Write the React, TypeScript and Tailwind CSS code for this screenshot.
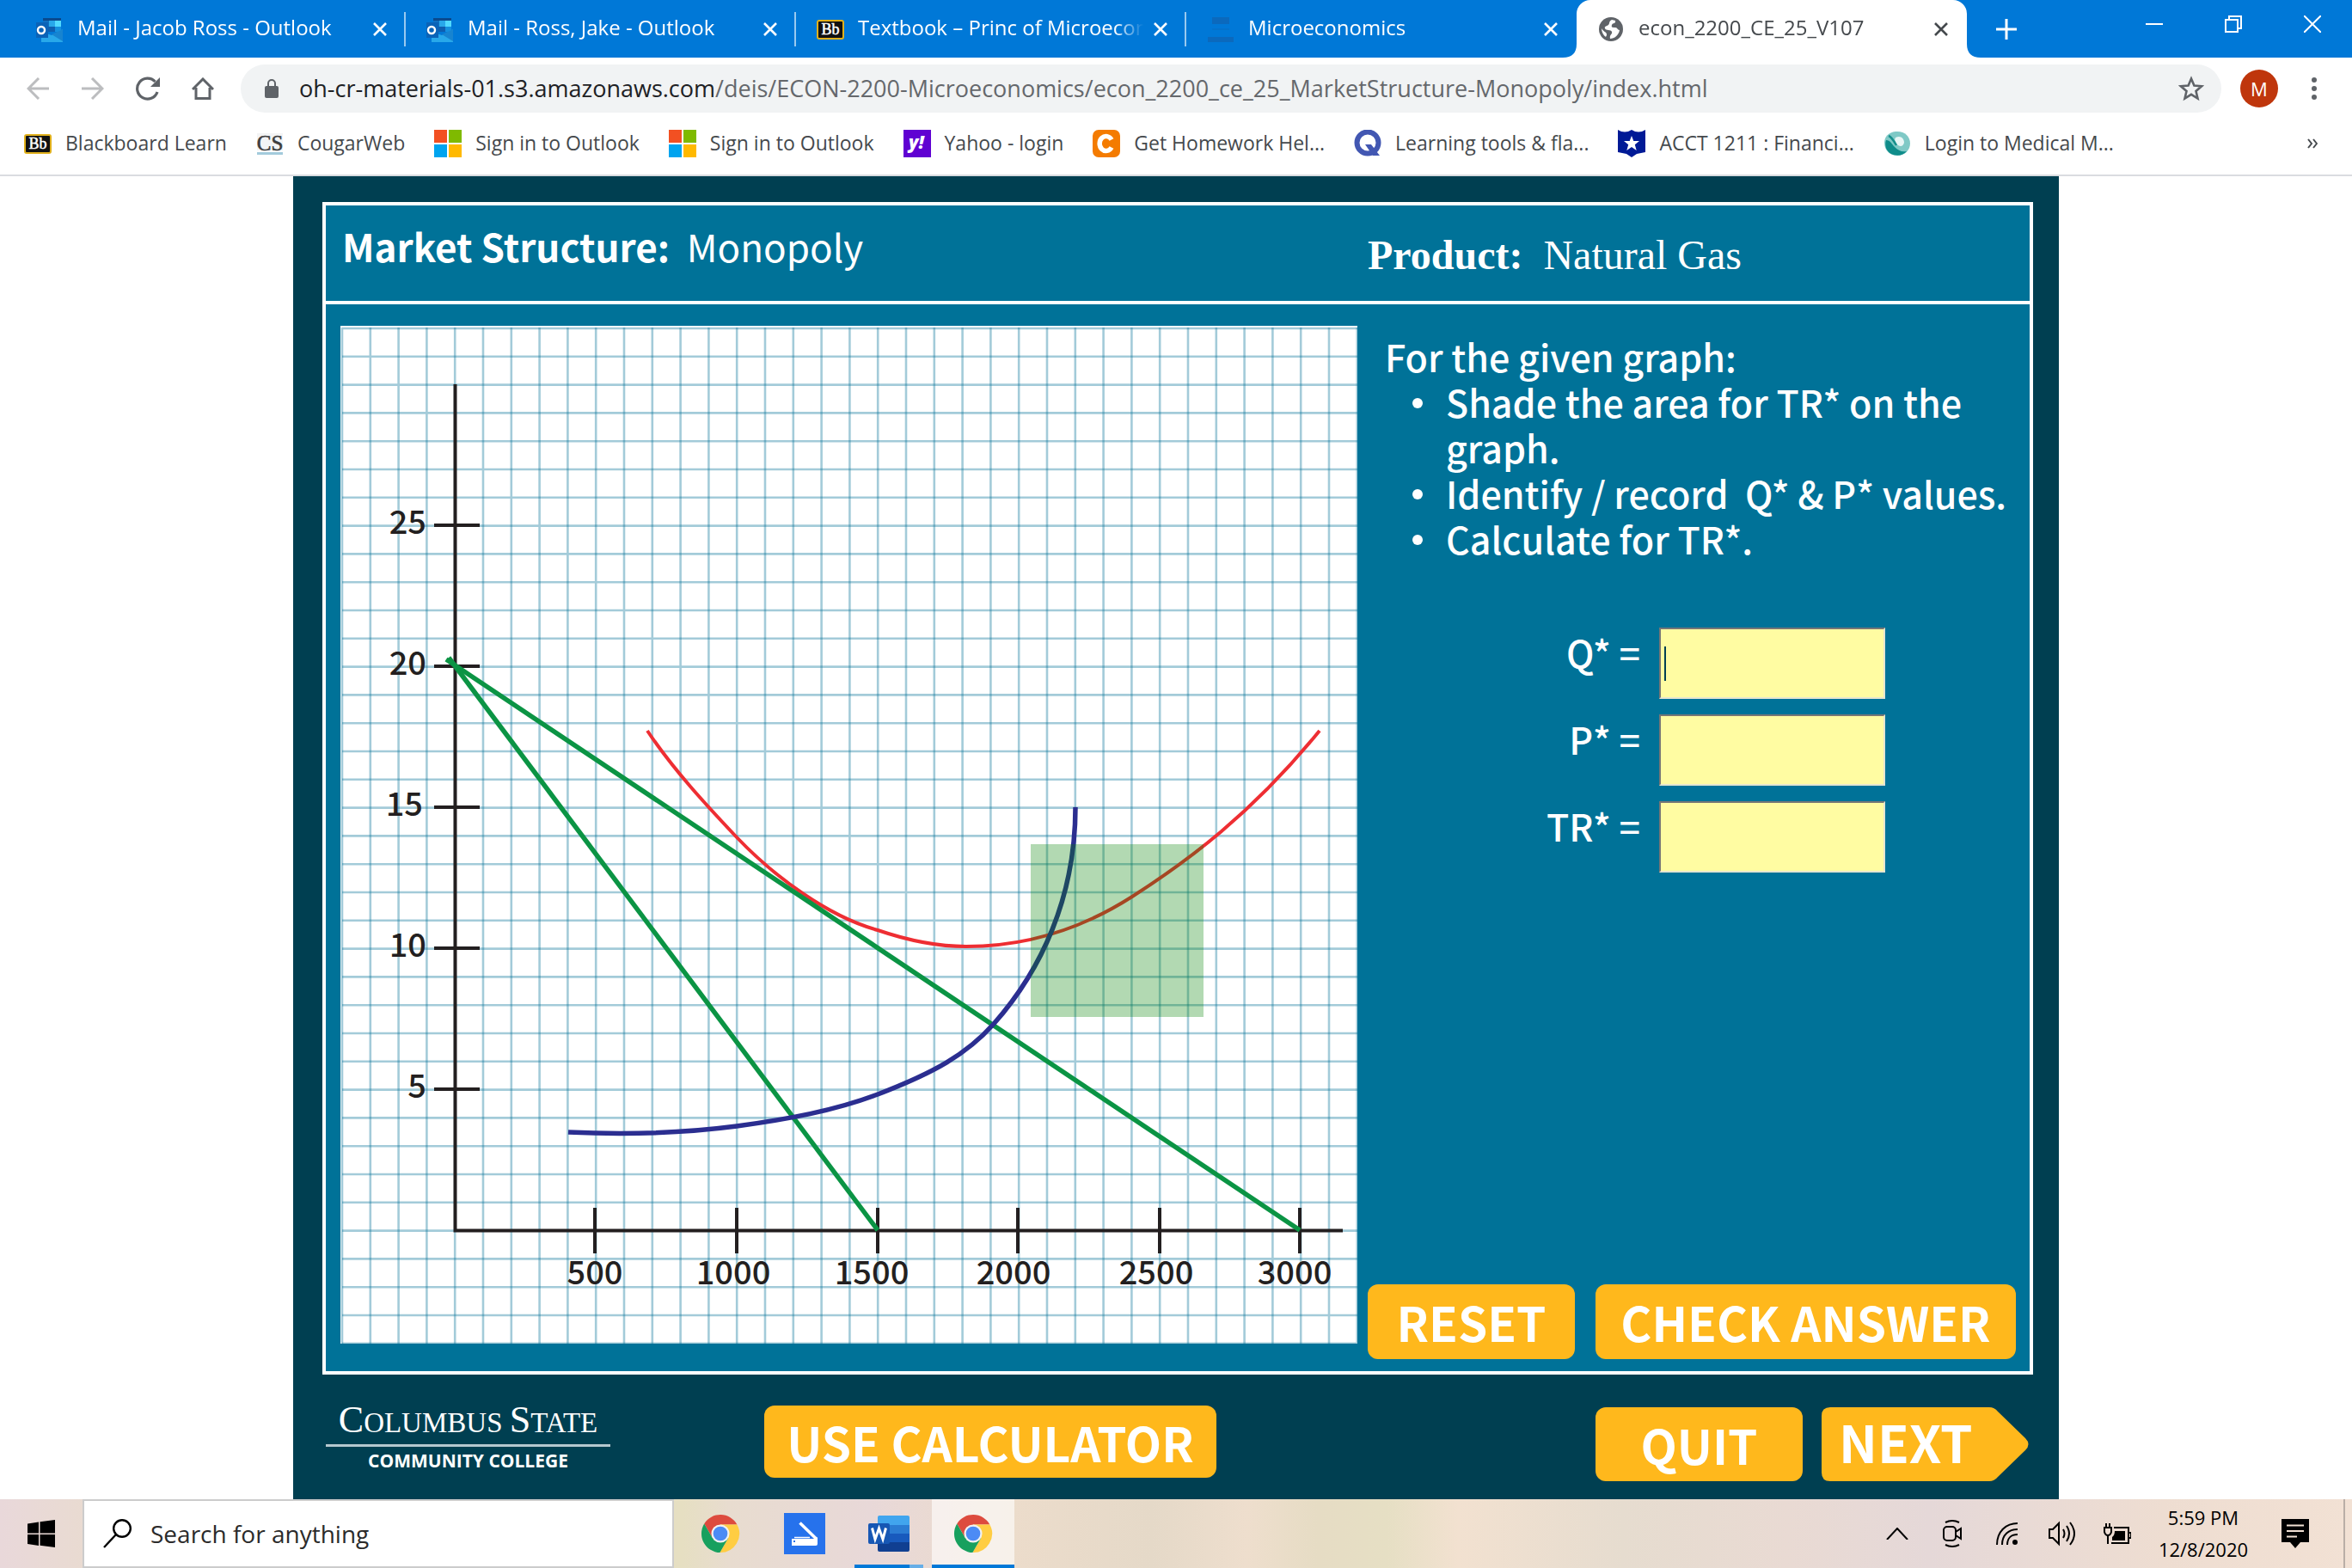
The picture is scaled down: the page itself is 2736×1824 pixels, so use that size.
import { useState } from 'react';
import type { ReactNode } from 'react';

type Tab = { title: string; icon: ReactNode; active?: boolean; divider?: boolean };
type Bookmark = { label: string; icon: ReactNode };

const CELL = 32.8;
const GRID = Array.from({ length: 37 }, (_, i) => 2 + i * CELL);

const Y_TICKS = [
  { label: '25', x: 99, y: 232 },
  { label: '20', x: 99, y: 396 },
  { label: '15', x: 95, y: 560 },
  { label: '10', x: 99, y: 724 },
  { label: '5', x: 99, y: 888 },
];

const X_TICKS = [
  { label: '500', x: 296, textX: 296 },
  { label: '1000', x: 461, textX: 457 },
  { label: '1500', x: 625, textX: 618 },
  { label: '2000', x: 788, textX: 783 },
  { label: '2500', x: 953, textX: 949 },
  { label: '3000', x: 1116, textX: 1110 },
];

function OutlookIcon() {
  return (
    <svg viewBox="0 0 32 32" className="size-8 shrink-0">
      <path d="M8 3h21v3H8z" fill="#0a4a8f" />
      <path d="M8 6h7v7H8z" fill="#0f6fc0" />
      <path d="M15 6h7v7h-7z" fill="#28a8ea" />
      <path d="M22 6h7v7h-7z" fill="#50d9ff" />
      <path d="M8 13h14v6H8z" fill="#0f5fb0" />
      <path d="M22 13h7v6h-7z" fill="#1490df" />
      <path d="M6 19l12 4 13-7v15H6z" fill="#28a8ea" />
      <path d="M18 22l13 8V16z" fill="#1784d0" />
      <path d="M0 8h14v18H0z" fill="#0a63b8" />
      <circle cx="6" cy="17" r="4" fill="none" stroke="#fff" strokeWidth="2.4" />
    </svg>
  );
}

function BlackboardIcon() {
  return (
    <svg viewBox="0 0 32 32" className="size-8 shrink-0">
      <rect x="1" y="6" width="30" height="21" rx="2" fill="#111" stroke="#e0b01c" strokeWidth="2" />
      <text x="16" y="22" textAnchor="middle" fontSize="18" fill="#fff" stroke="#fff" strokeWidth="0.5" className="font-['Liberation_Serif',serif]">Bb</text>
    </svg>
  );
}

function CougarIcon() {
  return (
    <svg viewBox="0 0 32 32" className="size-8 shrink-0">
      <rect x="1" y="4" width="30" height="20" fill="#f3f4f5" />
      <rect x="1" y="26" width="30" height="3" fill="#a3cbdc" />
      <text x="16" y="24" textAnchor="middle" fontSize="25" fill="#3d3d3d" stroke="#3d3d3d" strokeWidth="0.6" className="font-['Liberation_Serif',serif]">CS</text>
    </svg>
  );
}

function MicrosoftIcon() {
  return (
    <svg viewBox="0 0 32 32" className="size-8 shrink-0">
      <path d="M0 0h15v15H0z" fill="#f25022" />
      <path d="M17 0h15v15H17z" fill="#7fba00" />
      <path d="M0 17h15v15H0z" fill="#00a4ef" />
      <path d="M17 17h15v15H17z" fill="#ffb900" />
    </svg>
  );
}

function YahooIcon() {
  return (
    <svg viewBox="0 0 32 32" className="size-8 shrink-0">
      <path d="M0 0h32v32H0z" fill="#6001d2" />
      <text x="15" y="22" textAnchor="middle" fontSize="21" fontWeight="800" fontStyle="italic" fill="#fff" className="font-['Open_Sans',sans-serif]">y!</text>
    </svg>
  );
}

function CheggIcon() {
  return (
    <svg viewBox="0 0 32 32" className="size-8 shrink-0">
      <rect width="32" height="32" rx="7" fill="#f47b00" />
      <path d="M22 11.5A7.5 8.5 0 1 0 22 20.5" fill="none" stroke="#fff" strokeWidth="5.5" />
    </svg>
  );
}

function QuizletIcon() {
  return (
    <svg viewBox="0 0 32 32" className="size-8 shrink-0">
      <circle cx="16" cy="15" r="12.500" fill="none" stroke="#4257b2" strokeWidth="6" />
      <path d="M13 17h7l10 13h-8z" fill="#4257b2" />
    </svg>
  );
}

function ShieldStarIcon() {
  return (
    <svg viewBox="0 0 32 32" className="size-8 shrink-0">
      <path d="M0 0q8 5 16 0 8 5 16 0v26l-10 2-6 4-6-4-10-2z" fill="#001a96" />
      <path d="M16 7l2.300 6H25l-5.200 4.200L21.700 24 16 20l-5.700 4 1.900-6.800L7 13h6.700z" fill="#fff" />
    </svg>
  );
}

function MedicalIcon() {
  return (
    <svg viewBox="0 0 32 32" className="size-8 shrink-0">
      <path d="M14 2c10-1 17 5 17 14 0 7-6 14-15 14C8 30 1 24 1 15 1 8 6 3 14 2z" fill="#7fc9c6" />
      <path d="M3 12c5 0 6 4 10 8s8 6 14 5c-4 5-12 6-18 3S1 18 3 12z" fill="#0f8c8a" />
      <path d="M14 9c6-3 10 1 10 6-1 4-4 5-7 3-3-2-5-6-3-9z" fill="#e8f6f5" />
      <path d="M6 7c3 1 5 4 9 11" fill="none" stroke="#158f8c" strokeWidth="2.500" />
    </svg>
  );
}

function FadedIcon() {
  return (
    <svg viewBox="0 0 32 32" className="size-8 shrink-0">
      <path d="M6 2h20v8H6z" fill="#0b69bd" />
      <path d="M6 15h20v2H6z" fill="#0472cc" />
      <path d="M1 25h30v6H1z" fill="#0b69bd" />
    </svg>
  );
}

function GlobeIcon() {
  return (
    <svg viewBox="0 0 32 32" className="size-8 shrink-0">
      <circle cx="16" cy="16" r="14" fill="#5f6368" />
      <path d="M17 5c-4 2-2 4-4 6s-5 1-4 4 7 1 8 4-3 3-2 8c5 0 10-4 11-10-3 0-2-3-5-3s-5 0-4-3 5-1 4-5z" fill="#fff" />
      <path d="M5 15c2 4 6 4 6 7 0 2-1 2-1 3-3-2-5-6-5-10z" fill="#fff" />
    </svg>
  );
}

function ChromeIcon() {
  return (
    <svg viewBox="0 0 48 48" className="size-[46px]">
      <path d="M24 24V13H44.200A23 23 0 0 0 4.400 12L14.500 29.500z" fill="#dd4b3e" />
      <path d="M24 24V13H44.200A23 23 0 0 1 23.400 47L33.500 29.500z" fill="#ffcd42" />
      <path d="M24 24L14.500 29.500 4.400 12A23 23 0 0 0 23.400 47L33.500 29.500z" fill="#17a05e" />
      <circle cx="24" cy="24" r="11" fill="#f1f1f1" />
      <circle cx="24" cy="24" r="8.700" fill="#4c8bf5" />
    </svg>
  );
}

function ScanIcon() {
  return (
    <svg viewBox="0 0 48 48" className="size-12">
      <path d="M0 0h48v48H0z" fill="#2672ec" />
      <path d="M18.500 11.500L38 30.500" stroke="#fff" strokeWidth="3.500" />
      <path d="M12 28.500h18" stroke="#fff" strokeWidth="1.500" />
      <path d="M9 30h28l2-2v8q0 2-2 2H9z" fill="#fff" />
      <path d="M11 32h2v2h-2z" fill="#2672ec" />
    </svg>
  );
}

function WordIcon() {
  return (
    <svg viewBox="0 0 48 44" className="h-11 w-12">
      <path d="M13 0h33q2 0 2 2v9H11V2q0-2 2-2z" fill="#41a5ee" />
      <path d="M11 11h37v10H11z" fill="#2b7cd3" />
      <path d="M11 21h37v10H11z" fill="#185abd" />
      <path d="M11 31h37v9q0 2-2 2H13q-2 0-2-2z" fill="#103f91" />
      <rect x="0" y="9" width="25" height="24" rx="2" fill="#1757b4" />
      <path d="M4.500 14.500l3.500 13 4.500-12.500 4.500 12.500 3.500-13" fill="none" stroke="#fff" strokeWidth="3" />
    </svg>
  );
}

function CloseIcon() {
  return (
    <svg viewBox="0 0 16 16" className="size-4" fill="none" stroke="currentColor" strokeWidth="2.600">
      <path d="M1 1l14 14M15 1L1 15" />
    </svg>
  );
}

const tabs: Tab[] = [
  { title: 'Mail - Jacob Ross - Outlook', icon: <OutlookIcon />, divider: true },
  { title: 'Mail - Ross, Jake - Outlook', icon: <OutlookIcon />, divider: true },
  { title: 'Textbook – Princ of Microeconomics', icon: <BlackboardIcon />, divider: true },
  { title: 'Microeconomics', icon: <FadedIcon /> },
  { title: 'econ_2200_CE_25_V107', icon: <GlobeIcon />, active: true },
];

const bookmarks: Bookmark[] = [
  { label: 'Blackboard Learn', icon: <BlackboardIcon /> },
  { label: 'CougarWeb', icon: <CougarIcon /> },
  { label: 'Sign in to Outlook', icon: <MicrosoftIcon /> },
  { label: 'Sign in to Outlook', icon: <MicrosoftIcon /> },
  { label: 'Yahoo - login', icon: <YahooIcon /> },
  { label: 'Get Homework Hel...', icon: <CheggIcon /> },
  { label: 'Learning tools & fla...', icon: <QuizletIcon /> },
  { label: 'ACCT 1211 : Financi...', icon: <ShieldStarIcon /> },
  { label: 'Login to Medical M...', icon: <MedicalIcon /> },
];

function TabItem({ title, icon, active, divider }: Tab) {
  return (
    <div className={active
      ? 'relative flex h-full w-[454px] items-center rounded-t-2xl bg-white pl-6 text-[#45494d]'
      : 'flex h-full w-[454px] items-center pl-6 text-white'}
    >
      {active && (
        <>
          <svg viewBox="0 0 16 16" className="absolute bottom-0 -left-4 size-4"><path d="M16 0v16H0Q16 16 16 0z" fill="#fff" /></svg>
          <svg viewBox="0 0 16 16" className="absolute -right-4 bottom-0 size-4"><path d="M0 0v16h16Q0 16 0 0z" fill="#fff" /></svg>
        </>
      )}
      {icon}
      <span className="ml-4 flex-1 overflow-hidden pb-1 whitespace-nowrap [mask-image:linear-gradient(to_right,black_90%,transparent)]">{title}</span>
      <button type="button" aria-label={`Close ${title}`} className="mr-5 ml-3"><CloseIcon /></button>
      <span className={divider ? 'h-10 w-0.5 bg-white/60' : 'w-0.5'} />
    </div>
  );
}

function TabStrip() {
  return (
    <header className="flex h-[67px] bg-[#0078d7] pl-[18px] text-[24px] text-white">
      {tabs.map((tab) => <TabItem key={tab.title} {...tab} />)}
      <button type="button" aria-label="New tab" className="ml-[34px] flex items-center">
        <svg viewBox="0 0 24 24" className="size-6" stroke="#fff" strokeWidth="3"><path d="M12 0v24M0 12h24" /></svg>
      </button>
      <div className="ml-auto flex h-14">
        <button type="button" aria-label="Minimize" className="flex w-[92px] items-center justify-center">
          <svg viewBox="0 0 20 20" className="size-5" stroke="#fff" strokeWidth="2"><path d="M0 10h20" /></svg>
        </button>
        <button type="button" aria-label="Restore" className="flex w-[92px] items-center justify-center">
          <svg viewBox="0 0 20 20" className="size-5" fill="none" stroke="#fff" strokeWidth="2"><path d="M1 5h14v14H1zM5 5V1h14v14h-4" /></svg>
        </button>
        <button type="button" aria-label="Close window" className="flex w-[92px] items-center justify-center">
          <svg viewBox="0 0 20 20" className="size-5" stroke="#fff" strokeWidth="2"><path d="M0 0l20 20M20 0L0 20" /></svg>
        </button>
      </div>
    </header>
  );
}

function Toolbar() {
  return (
    <div className="flex h-[72px] items-center bg-white pl-3">
      <button type="button" aria-label="Back" className="flex w-16 justify-center">
        <svg viewBox="0 0 26 26" className="size-[26px]" fill="none" stroke="#bcbdbf" strokeWidth="3"><path d="M26 13H2M14 1L2 13l12 12" /></svg>
      </button>
      <button type="button" aria-label="Forward" className="flex w-16 justify-center">
        <svg viewBox="0 0 26 26" className="size-[26px]" fill="none" stroke="#bcbdbf" strokeWidth="3"><path d="M0 13h24M12 1l12 12-12 12" /></svg>
      </button>
      <button type="button" aria-label="Reload" className="flex w-16 justify-center">
        <svg viewBox="0 0 28 28" className="size-7" fill="none" stroke="#5f6368" strokeWidth="3.200">
          <path d="M25 18A12 12 0 1 1 22.500 6" />
          <path d="M28 1v11H17z" fill="#5f6368" stroke="none" />
        </svg>
      </button>
      <button type="button" aria-label="Home" className="flex w-16 justify-center">
        <svg viewBox="0 0 26 26" className="size-[26px]" fill="none" stroke="#5f6368" strokeWidth="3"><path d="M1 14L13 2l12 12M5 12v12.500h16V12" /></svg>
      </button>
      <div className="ml-3 flex h-14 flex-1 items-center rounded-full bg-[#f1f3f4] pr-5 pl-7">
        <svg viewBox="0 0 16 22" className="h-[22px] w-4">
          <rect y="8" width="16" height="14" rx="2" fill="#5f6368" />
          <path d="M4 9V5a4 4 0 0 1 8 0v4" fill="none" stroke="#5f6368" strokeWidth="2" />
        </svg>
        <div role="textbox" aria-label="Address" className="ml-6 flex-1 text-[27px] whitespace-nowrap text-[#65686c]">
          <span className="text-[#202124]">oh-cr-materials-01.s3.amazonaws.com</span>
          /deis/ECON-2200-Microeconomics/econ_2200_ce_25_MarketStructure-Monopoly/index.html
        </div>
        <button type="button" aria-label="Bookmark this page">
          <svg viewBox="0 0 30 30" className="size-[30px]" fill="none" stroke="#5f6368" strokeWidth="2.600">
            <path d="M15 3.500l3.400 8 8.600.8-6.500 5.700 2 8.500-7.500-4.600-7.500 4.600 2-8.500L3 12.300l8.600-.8z" />
          </svg>
        </button>
      </div>
      <button type="button" className="ml-[22px] size-11 rounded-full bg-[#bf360c] text-[22px] text-white">M</button>
      <button type="button" aria-label="Menu" className="mr-[41px] ml-[39px] flex flex-col gap-1">
        <span className="size-1.5 rounded-full bg-[#5f6368]" />
        <span className="size-1.5 rounded-full bg-[#5f6368]" />
        <span className="size-1.5 rounded-full bg-[#5f6368]" />
      </button>
    </div>
  );
}

function BookmarkBar() {
  return (
    <nav className="flex items-center gap-[34px] border-b-2 border-[#dadce0] bg-white pr-10 pb-2 pl-7 text-[23px] whitespace-nowrap text-[#45494d]">
      {bookmarks.map((b, i) => (
        <a key={i} href="#" className="flex h-14 items-center gap-4">
          {b.icon}
          <span className="pb-0.5">{b.label}</span>
        </a>
      ))}
      <button type="button" aria-label="More bookmarks" className="ml-auto">
        <svg viewBox="0 0 12 12" className="size-3" fill="none" stroke="#45494d" strokeWidth="2"><path d="M1 1l4 5-4 5M7 1l4 5-4 5" /></svg>
      </button>
    </nav>
  );
}

function Graph() {
  return (
    <svg viewBox="0 0 1183 1184" className="mt-[25px] mb-8 block w-full bg-white" role="img" aria-label="Monopoly cost and revenue curves">
      <g stroke="#006f96" strokeOpacity="0.36" strokeWidth="2.600">
        {GRID.map((p) => <path key={p} d={`M${p} 2V1184M2 ${p + 1}H1183`} />)}
      </g>

      {/* Axes */}
      <g stroke="#231f20" strokeWidth="4" fill="none">
        <path d="M133.500 68V1052.500H1166" />
        {Y_TICKS.map((t) => <path key={t.label} d={`M109 ${t.y}h53`} />)}
        {X_TICKS.map((t) => <path key={t.label} d={`M${t.x} 1026v53`} />)}
      </g>
      <g fill="#231f20" fontSize="38" fontWeight="500" className="font-['Noto_Sans_CJK_SC',sans-serif]">
        {Y_TICKS.map((t) => <text key={t.label} x={t.x + 1} y={t.y + 10} textAnchor="end">{t.label}</text>)}
        {X_TICKS.map((t) => <text key={t.label} x={t.textX} y="1115" textAnchor="middle">{t.label}</text>)}
      </g>

      {/* Cost and revenue curves */}
      <g fill="none">
        <path d="M357 471C387 516 426 558 461 595C505 641 567 687 625 703C660 715 695 722 728 722C795 722 860 703 921 664C985 623 1060 568 1139 471" stroke="#ee2e33" strokeWidth="4" />
        <path d="M123 388L1116 1052" stroke="#0b9444" strokeWidth="5.500" />
        <path d="M126 386L625 1052" stroke="#0b9444" strokeWidth="5.500" />
        <path d="M265 938C330 941 400 939 461 931C520 923 575 913 625 894C690 869 728 848 760 812C815 750 855 665 855 560" stroke="#2b2e90" strokeWidth="5.500" />
      </g>

      {/* Shaded region */}
      <rect x="803" y="603" width="201" height="201" fill="#008000" fillOpacity="0.3" />
    </svg>
  );
}

const steps = [
  'Shade the area for TR* on the graph.',
  'Identify / record \u00a0Q* & P* values.',
  'Calculate for TR*.',
];

function Answers() {
  const [values, setValues] = useState<Record<string, string>>({ 'Q*': '', 'P*': '', 'TR*': '' });

  return (
    <form className="mt-[77px] flex flex-col items-end gap-[18px] pr-[168px]">
      {Object.keys(values).map((name, i) => (
        <div key={name} className="relative flex items-center gap-[22px]">
          <label htmlFor={`answer-${i}`} className="pb-[26px]">{name} =</label>
          <input
            id={`answer-${i}`}
            value={values[name]}
            onChange={(e) => setValues({ ...values, [name]: e.target.value })}
            className="h-[83px] w-[263px] border-2 border-t-[#767676] border-r-[#e5e5d0] border-b-[#e5e5d0] border-l-[#767676] bg-[#fffca2] px-1 text-[#003f51] outline-none"
          />
          {i === 0 && !values[name] && <span className="absolute top-[22px] right-[255px] h-10 w-0.5 bg-[#003f51]" />}
        </div>
      ))}
    </form>
  );
}

function Exercise() {
  return (
    <section className="mx-auto w-full max-w-[2054px] bg-[#003f51] pt-[30px] pr-[30px] pl-[34px] font-['Noto_Sans_CJK_SC',sans-serif] text-white">
      <div className="border-4 border-white bg-[#007298]">
        <div className="grid h-[115px] grid-cols-[1183fr_782fr] items-start border-b-4 border-white pl-[17px]">
          <h1 className="pl-0.5 text-[44px] leading-[94px]">
            <b>Market Structure:</b>&nbsp; Monopoly
          </h1>
          <p className="pl-3 font-['Liberation_Serif',serif] text-[48px] leading-[116px]">
            <b>Product:</b>&nbsp; Natural Gas
          </p>
        </div>
        <div className="grid grid-cols-[1183fr_782fr] pl-[17px]">
          <Graph />
          <div className="flex flex-col pt-[34px] pb-[14px] text-[43px] leading-[53px] font-medium">
            <p className="pl-8">For the given graph:</p>
            <ul className="pr-4 pl-16">
              {steps.map((step) => (
                <li key={step} className="flex gap-[27px]">
                  <span className="mt-[22px] size-3 shrink-0 rounded-full bg-white" />
                  <span>{step}</span>
                </li>
              ))}
            </ul>
            <Answers />
            <div className="mt-auto flex gap-6 pr-4 pl-3 text-[55px] font-bold">
              <button type="button" className="h-[87px] w-[241px] rounded-xl bg-[#ffb81c]">RESET</button>
              <button type="button" className="h-[87px] flex-1 rounded-xl bg-[#ffb81c]">CHECK ANSWER</button>
            </div>
          </div>
        </div>
      </div>

      <footer className="flex h-[145px] items-start pr-[5px] pl-1">
        <div className="w-[331px] pt-8 text-center">
          <p className="font-['Liberation_Serif',serif] text-[33px] leading-[42px]">
            <span className="text-[44px]">C</span>OLUMBUS <span className="text-[44px]">S</span>TATE
          </p>
          <div className="mt-1 h-[3px] bg-[#b5c8cf]" />
          <p className="mt-1.5 font-['Open_Sans',sans-serif] text-[21px] leading-5 font-bold">COMMUNITY COLLEGE</p>
        </div>
        <button type="button" className="mt-9 ml-[179px] h-[84px] w-[526px] rounded-xl bg-[#ffb81c] text-[55px] font-bold">USE CALCULATOR</button>
        <div className="mt-[38px] ml-auto flex gap-[22px] font-bold">
          <button type="button" className="h-[86px] w-[241px] rounded-xl bg-[#ffb81c] text-[55px]">QUIT</button>
          <button type="button" className="relative h-[86px] w-[241px] pb-[9px] pl-5 text-left text-[60px] leading-[77px]">
            <svg viewBox="0 0 241 86" className="absolute inset-0"><path d="M10 0H195Q201 0 205 5L237 36Q244 43 237 50L205 81Q201 86 195 86H10Q0 86 0 76V10Q0 0 10 0z" fill="#ffb81c" /></svg>
            <span className="relative">NEXT</span>
          </button>
        </div>
      </footer>
    </section>
  );
}

function Tray() {
  return (
    <div className="ml-auto flex items-center">
      <button type="button" aria-label="Show hidden icons" className="flex w-16 justify-center">
        <svg viewBox="0 0 26 14" className="h-3.5 w-[26px]" fill="none" stroke="#000" strokeWidth="2"><path d="M1 14L13 1l12 13" /></svg>
      </button>
      <button type="button" aria-label="Meet now" className="flex w-16 justify-center">
        <svg viewBox="0 0 24 32" className="h-8 w-6" fill="none" stroke="#000" strokeWidth="2">
          <rect x="2" y="8" width="14" height="16" rx="4" />
          <path d="M16 14l6-4v12l-6-4M4 3q8-4 16 0M4 29q8 4 16 0" />
        </svg>
      </button>
      <button type="button" aria-label="Network" className="flex w-16 justify-center">
        <svg viewBox="0 0 26 26" className="size-[26px]" fill="none" stroke="#000" strokeWidth="2">
          <path d="M1 26C1 10 12 1 25 1M7 26C7 14 15 8 25 8M13 26c0-8 5-12 12-12" />
          <circle cx="22" cy="23" r="3" fill="#000" stroke="none" />
        </svg>
      </button>
      <button type="button" aria-label="Volume" className="flex w-16 justify-center">
        <svg viewBox="0 0 32 30" className="h-[30px] w-8" fill="none" stroke="#000" strokeWidth="2">
          <path d="M1 10h4l7-7v24l-7-7H1zM17 10q3 5 0 10M21 6q6 9 0 18M25 2q10 13 0 26" />
        </svg>
      </button>
      <button type="button" aria-label="Battery" className="flex w-16 justify-center">
        <svg viewBox="0 0 32 24" className="h-6 w-8" fill="none" stroke="#000" strokeWidth="2">
          <path d="M12 5h17v18H9M30 11h2v6h-2M3 0v5M7 0v5M5 14v10M1 5h8v5q-1 4-4 4t-4-4z" />
          <path d="M13 9h12v11H10v-4q3-2 3-7z" fill="#000" stroke="none" />
        </svg>
      </button>
      <time className="w-[136px] text-center text-[22px] leading-[37px] text-black">
        5:59 PM<br />12/8/2020
      </time>
      <button type="button" aria-label="Notifications" className="flex w-[78px] justify-center">
        <svg viewBox="0 0 32 34" className="h-[34px] w-8">
          <path d="M0 0h32v27h-10l-6 7-6-7H0z" fill="#000" />
          <path d="M6 7.500h20M6 14h20M6 20.500h12" stroke="#f2e1d4" strokeWidth="2" />
        </svg>
      </button>
      <span className="mr-2 ml-[17px] h-full w-0.5 bg-[#b9aea6]" />
    </div>
  );
}

function Taskbar() {
  return (
    <footer className="flex h-20 bg-[linear-gradient(to_right,#e9d8da_0%,#e9dbd0_4%,#e6dfc2_29%,#e8dccf_31%,#e8d8d8_37%,#ecdccb_43%,#e5d9c8_49%,#eedecd_53%,#e6dcc4_56%,#e6dfc4_59%,#f2e1d0_62%,#e6dccf_69%,#e9dad3_76%,#e5d8d8_82%,#eeddd1_92%,#f2e1d4_100%)]">
      <button type="button" aria-label="Start" className="flex w-24 items-center justify-center">
        <svg viewBox="0 0 32 32" className="size-8"><path d="M0 4.500l13-2v13H0zM14.500 2.300L32 0v15.500H14.500zM0 17h13v13l-13-2zM14.500 17H32v15l-17.500-2.300z" /></svg>
      </button>
      <label className="flex w-[688px] items-center border-2 border-[#ccc] bg-white pl-[22px]">
        <svg viewBox="0 0 34 34" className="size-[34px] shrink-0" fill="none" stroke="#000" strokeWidth="2.400"><circle cx="22" cy="11" r="9.800" /><path d="M15 18L1 33" /></svg>
        <input aria-label="Search" placeholder="Search for anything" className="ml-[21px] w-full text-[28px] outline-none placeholder:text-[#2b2b2b]" />
      </label>
      <div className="ml-1.5 flex gap-0.5">
        <button type="button" aria-label="Chrome" className="flex w-24 items-center justify-center"><ChromeIcon /></button>
        <button type="button" aria-label="Scan" className="flex w-24 items-center justify-center"><ScanIcon /></button>
        <button type="button" aria-label="Word" className="flex w-24 flex-col items-center justify-end">
          <WordIcon />
          <span className="mt-[13px] flex h-1 w-20 bg-[#0078d7]"><span className="ml-auto w-4 bg-[#66aee7]" /></span>
        </button>
        <button type="button" aria-label="Chrome window" className="flex w-24 items-center justify-center border-b-4 border-[#0078d7] bg-white/60 pt-1"><ChromeIcon /></button>
      </div>
      <Tray />
    </footer>
  );
}

export default function App() {
  return (
    <div className="flex min-h-screen flex-col bg-white font-['Open_Sans',sans-serif]">
      <TabStrip />
      <Toolbar />
      <BookmarkBar />
      <main className="flex flex-1 flex-col bg-white">
        <Exercise />
      </main>
      <Taskbar />
    </div>
  );
}
